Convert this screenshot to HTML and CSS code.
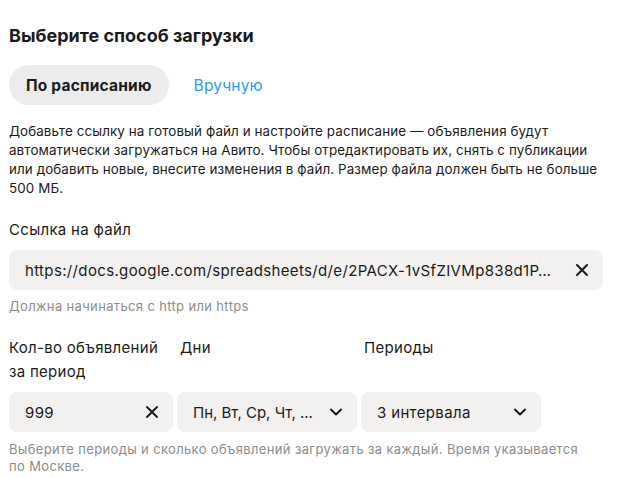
FILE: index.html
```html
<!DOCTYPE html>
<html lang="ru">
<head>
<meta charset="utf-8">
<link rel="stylesheet" href="styles.css">
</head>
<body>
<div class="page">
  <h1 class="title">Выберите способ загрузки</h1>
  <div class="tabs">
    <span class="tab tab-active">По расписанию</span>
    <span class="tab tab-link">Вручную</span>
  </div>
  <p class="desc">Добавьте ссылку на готовый файл и настройте расписание — объявления будут автоматически загружаться на Авито. Чтобы отредактировать их, снять с публикации или добавить новые, внесите изменения в файл. Размер файла должен быть не больше 500 МБ.</p>
  <div class="label">Ссылка на файл</div>
  <div class="field field-url">
    <span class="value">https://docs.google.com/spreadsheets/d/e/2PACX-1vSfZIVMp838d1P…</span>
    <svg class="icon" width="14" height="14" viewBox="0 0 14 14"><path d="M2 2L12 12M12 2L2 12" stroke="#1a1a1a" stroke-width="2" stroke-linecap="round"/></svg>
  </div>
  <div class="hint">Должна начинаться с http или https</div>
  <div class="grid">
    <div class="label label-grid">Кол-во объявлений за период</div>
    <div class="label label-grid label-shift">Дни</div>
    <div class="label label-grid label-shift">Периоды</div>
    <div class="field">
      <span class="value">999</span>
      <svg class="icon" width="14" height="14" viewBox="0 0 14 14"><path d="M2 2L12 12M12 2L2 12" stroke="#1a1a1a" stroke-width="2" stroke-linecap="round"/></svg>
    </div>
    <div class="field">
      <span class="value value-days">Пн, Вт, Ср, Чт, ...</span>
      <svg class="icon" width="14" height="14" viewBox="0 0 14 14"><path d="M2 4.5L7 9.5L12 4.5" fill="none" stroke="#1a1a1a" stroke-width="2" stroke-linecap="round" stroke-linejoin="round"/></svg>
    </div>
    <div class="field">
      <span class="value">3 интервала</span>
      <svg class="icon" width="14" height="14" viewBox="0 0 14 14"><path d="M2 4.5L7 9.5L12 4.5" fill="none" stroke="#1a1a1a" stroke-width="2" stroke-linecap="round" stroke-linejoin="round"/></svg>
    </div>
  </div>
  <div class="hint hint-last">Выберите периоды и сколько объявлений загружать за каждый. Время указывается по Москве.</div>
</div>
</body>
</html>
```
FILE: styles.css
```css
* { box-sizing: border-box; }
body {
  margin: 0;
  background: #fff;
  font-family: Inter, "Noto Sans", sans-serif;
  color: #1a1a1a;
}
.page {
  width: 594px;
  margin-left: 9px;
  padding-top: 24px;
}
.title {
  margin: 0;
  font-size: 18px;
  font-weight: 700;
  line-height: 24px;
}
.tabs {
  display: flex;
  align-items: center;
  margin-top: 17px;
  gap: 8px;
}
.tab {
  height: 40px;
  display: flex;
  align-items: center;
  padding: 0 17px;
  font-size: 15.5px;
  letter-spacing: 0.2px;
  border-radius: 20px;
  white-space: nowrap;
}
.tab-active {
  background: #ececec;
  font-weight: 700;
}
.tab-link {
  color: #2a9af5;
  padding-left: 17px;
}
.desc {
  margin: 17px 0 0;
  font-size: 13.4px;
  line-height: 19px;
  letter-spacing: 0.1px;
  width: 590px;
}
.label {
  font-size: 15px;
  letter-spacing: 0.3px;
  line-height: 24px;
  margin-top: 20px;
}
.field {
  height: 40px;
  background: #f2f1f0;
  border-radius: 8px;
  display: flex;
  align-items: center;
  justify-content: space-between;
  padding: 0 14px 0 16px;
  font-size: 15px;
  letter-spacing: 0.35px;
}
.field-url { margin-top: 8px; }
.value {
  white-space: nowrap;
  overflow: hidden;
}
.value-days { letter-spacing: 0; }
.icon { flex: none; }
.hint {
  color: #8c8c8c;
  font-size: 13px;
  letter-spacing: 0.35px;
  line-height: 17px;
  margin-top: 8px;
}
.grid {
  display: grid;
  grid-template-columns: 164px 180px 180px;
  column-gap: 4px;
  margin-top: 21px;
}
.label-grid {
  margin-top: 0;
  padding-bottom: 8px;
}
.label-shift { padding-left: 3px; }
.hint-last {
  width: 580px;
  margin-top: 9px;
}
```
